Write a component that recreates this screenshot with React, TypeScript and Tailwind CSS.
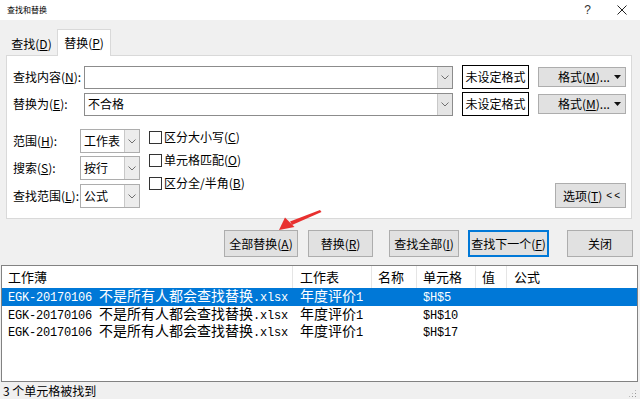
import React from "react";

const U = ({ c }: { c: string }) => <span className="underline">{c}</span>;

function Chevron() {
  return (
    <svg width="8" height="5" viewBox="0 0 8 5">
      <path d="M0.5 0.5 L4 4 L7.5 0.5" fill="none" stroke="#707070" strokeWidth="1" />
    </svg>
  );
}

function Select({ value }: { value: string }) {
  return (
    <div className="w-[60px] h-[24px] border border-[#adadad] bg-white flex">
      <div className="flex-1 flex items-center pl-[3px] text-[12px]">{value}</div>
      <div className="w-[15px] bg-[#ececec] border-l border-[#c8c8c8] flex items-center justify-center">
        <Chevron />
      </div>
    </div>
  );
}

function Combo({ value }: { value: string }) {
  return (
    <div className="w-[369px] h-[23px] border border-[#8c8c8c] bg-white flex">
      <div className="flex-1 flex items-center pl-[3px] text-[12px]">{value}</div>
      <div className="w-[15px] bg-[#e5e5e5] border-l border-[#c8c8c8] flex items-center justify-center">
        <Chevron />
      </div>
    </div>
  );
}

function Check({ children }: { children: React.ReactNode }) {
  return (
    <div className="h-[16px] flex items-center">
      <div className="w-[13px] h-[13px] border border-[#333] bg-white" />
      <span className="ml-[2px] text-[12px]">{children}</span>
    </div>
  );
}

function Btn({ w, ml, children, focus }: { w: string; ml: string; children: React.ReactNode; focus?: boolean }) {
  return (
    <div
      className={
        "h-[27px] flex items-center justify-center text-[12px] bg-[#e1e1e1] " +
        (focus ? "border-2 border-[#0078d7] " : "border border-[#adadad] ") +
        w +
        " " +
        ml
      }
    >
      {children}
    </div>
  );
}

const Mono = ({ children }: { children: React.ReactNode }) => (
  <span className="font-['Liberation_Mono',monospace] text-[12px] tracking-[-0.2px]">{children}</span>
);
const Cjk = ({ children }: { children: React.ReactNode }) => (
  <span className="font-['Noto_Sans_CJK_SC',sans-serif] text-[14px]">{children}</span>
);

function Row({ cell, selected }: { cell: string; selected?: boolean }) {
  return (
    <div className={"h-[17.5px] flex items-center leading-[17px] " + (selected ? "bg-[#0078d7] text-white" : "")}>
      <div className="w-[291px] pl-[6px] whitespace-nowrap">
        <Mono>EGK-20170106 </Mono>
        <Cjk>不是所有人都会查找替换</Cjk>
        <Mono>.xlsx</Mono>
      </div>
      <div className="w-[79px] pl-[7px] whitespace-nowrap">
        <Cjk>年度评价</Cjk>
        <Mono>1</Mono>
      </div>
      <div className="w-[45px]" />
      <div className="w-[59px] pl-[6px]">
        <Mono>{cell}</Mono>
      </div>
      <div className="flex-1" />
    </div>
  );
}

export default function App() {
  return (
    <div className="w-[640px] h-[399px] bg-[#f0f0f0] relative overflow-hidden text-black font-['Noto_Sans_CJK_SC',sans-serif] flex flex-col">
      {/* title bar */}
      <div className="h-[20px] bg-white flex items-center pl-[7px] pr-[13px] shrink-0">
        <span className="text-[8px] leading-none">查找和替换</span>
        <span className="ml-auto text-[12px] text-[#333] leading-none font-['Liberation_Sans',sans-serif]">?</span>
        <svg className="ml-[26px]" width="10" height="10" viewBox="0 0 10 10">
          <path d="M0.5 0.5 L9.5 9.5 M9.5 0.5 L0.5 9.5" stroke="#222" strokeWidth="1" />
        </svg>
      </div>

      {/* tabs */}
      <div className="h-[35px] flex items-end pl-[6px] shrink-0">
        <div className="w-[51px] h-[23px] flex items-center justify-center text-[12px]">
          查找(<U c="D" />)
        </div>
        <div className="relative z-10 w-[54px] h-[27px] -mb-px bg-white border border-b-0 border-[#d9d9d9] flex items-center justify-center text-[12px]">
          替换(<U c="P" />)
        </div>
      </div>

      {/* panel */}
      <div className="ml-[6px] w-[626px] h-[164px] bg-white border border-[#d9d9d9] shrink-0 pt-[9px] pl-[6px] pr-[5px] flex flex-col">
        <div className="flex items-center h-[24px]">
          <div className="w-[71px] text-[12px]">
            查找内容(<U c="N" />):
          </div>
          <Combo value="" />
          <div className="ml-[9px] w-[67px] h-[24px] border border-black flex items-center justify-center text-[12px]">未设定格式</div>
          <div className="ml-[9px] w-[88px] h-[20px] bg-[#e1e1e1] border border-[#adadad] flex items-center pl-[19px] pr-[4px] text-[12px]">
            <span>
              格式(<U c="M" />)...
            </span>
            <svg className="ml-auto" width="7" height="4" viewBox="0 0 7 4">
              <path d="M0 0 L7 0 L3.5 4 Z" fill="#111" />
            </svg>
          </div>
        </div>
        <div className="flex items-center h-[24px] mt-[3px]">
          <div className="w-[71px] text-[12px]">
            替换为(<U c="E" />):
          </div>
          <Combo value="不合格" />
          <div className="ml-[9px] w-[67px] h-[24px] border border-black flex items-center justify-center text-[12px]">未设定格式</div>
          <div className="ml-[9px] w-[88px] h-[20px] bg-[#e1e1e1] border border-[#adadad] flex items-center pl-[19px] pr-[4px] text-[12px]">
            <span>
              格式(<U c="M" />)...
            </span>
            <svg className="ml-auto" width="7" height="4" viewBox="0 0 7 4">
              <path d="M0 0 L7 0 L3.5 4 Z" fill="#111" />
            </svg>
          </div>
        </div>

        <div className="flex mt-[13px]">
          <div className="flex flex-col">
            <div className="flex items-center">
              <div className="w-[67px] text-[12px]">
                范围(<U c="H" />):
              </div>
              <Select value="工作表" />
            </div>
            <div className="flex items-center mt-[3px]">
              <div className="w-[67px] text-[12px]">
                搜索(<U c="S" />):
              </div>
              <Select value="按行" />
            </div>
            <div className="flex items-center mt-[4px]">
              <div className="w-[67px] text-[12px]">
                查找范围(<U c="L" />):
              </div>
              <Select value="公式" />
            </div>
          </div>
          <div className="ml-[9px] flex flex-col gap-[7px]">
            <Check>
              区分大小写(<U c="C" />)
            </Check>
            <Check>
              单元格匹配(<U c="O" />)
            </Check>
            <Check>
              区分全/半角(<U c="B" />)
            </Check>
          </div>
          <div className="ml-auto self-end w-[71px] h-[25px] bg-[#e1e1e1] border border-[#adadad] flex items-center pl-[7px] text-[12px]">
            <span>
              选项(<U c="T" />)
            </span>
            <span className="ml-[4px] text-[10px] font-['Liberation_Sans',sans-serif] tracking-[2px]">&lt;&lt;</span>
          </div>
        </div>
      </div>

      {/* action buttons */}
      <div className="flex mt-[11px] pl-[224px] shrink-0">
        <Btn w="w-[74px]" ml="">
          全部替换(<U c="A" />)
        </Btn>
        <Btn w="w-[65px]" ml="ml-[10px]">
          替换(<U c="R" />)
        </Btn>
        <Btn w="w-[70px]" ml="ml-[16px]">
          查找全部(<U c="I" />)
        </Btn>
        <Btn w="w-[81px]" ml="ml-[9px]" focus>
          查找下一个(<U c="F" />)
        </Btn>
        <Btn w="w-[66px]" ml="ml-[18px]">
          关闭
        </Btn>
      </div>

      {/* results list */}
      <div className="mt-[8px] ml-[1px] w-[637px] h-[117px] bg-white border border-[#828282] shrink-0 flex flex-col">
        <div className="h-[22px] flex text-[13px]">
          <div className="w-[291px] pl-[6px] flex items-center border-r border-[#e5e5e5]">工作薄</div>
          <div className="w-[79px] pl-[7px] flex items-center border-r border-[#e5e5e5]">工作表</div>
          <div className="w-[45px] pl-[6px] flex items-center border-r border-[#e5e5e5]">名称</div>
          <div className="w-[59px] pl-[6px] flex items-center border-r border-[#e5e5e5]">单元格</div>
          <div className="w-[31px] pl-[6px] flex items-center border-r border-[#e5e5e5]">值</div>
          <div className="flex-1 pl-[7px] flex items-center">公式</div>
        </div>
        <Row cell="$H$5" selected />
        <Row cell="$H$10" />
        <Row cell="$H$17" />
      </div>

      {/* status bar */}
      <div className="flex-1 flex items-center pl-[3px] text-[12px] relative">
        3 个单元格被找到
        <svg className="absolute right-[3px] bottom-[2px]" width="8" height="8" viewBox="0 0 8 8">
          <rect x="6" y="6" width="1" height="1" fill="#999" />
          <rect x="3" y="6" width="1" height="1" fill="#999" />
          <rect x="6" y="3" width="1" height="1" fill="#999" />
          <rect x="0" y="6" width="1" height="1" fill="#bbb" />
          <rect x="6" y="0" width="1" height="1" fill="#bbb" />
          <rect x="3" y="3" width="1" height="1" fill="#bbb" />
        </svg>
      </div>

      {/* red annotation arrow */}
      <svg className="absolute left-[275px] top-[205px]" width="50" height="30" viewBox="0 0 50 30">
        <polygon points="45,5 46.5,7 17,20 15,16.5" fill="#e8302f" />
        <polygon points="4,25 10,12.5 19.5,22" fill="#e8302f" />
      </svg>
    </div>
  );
}
